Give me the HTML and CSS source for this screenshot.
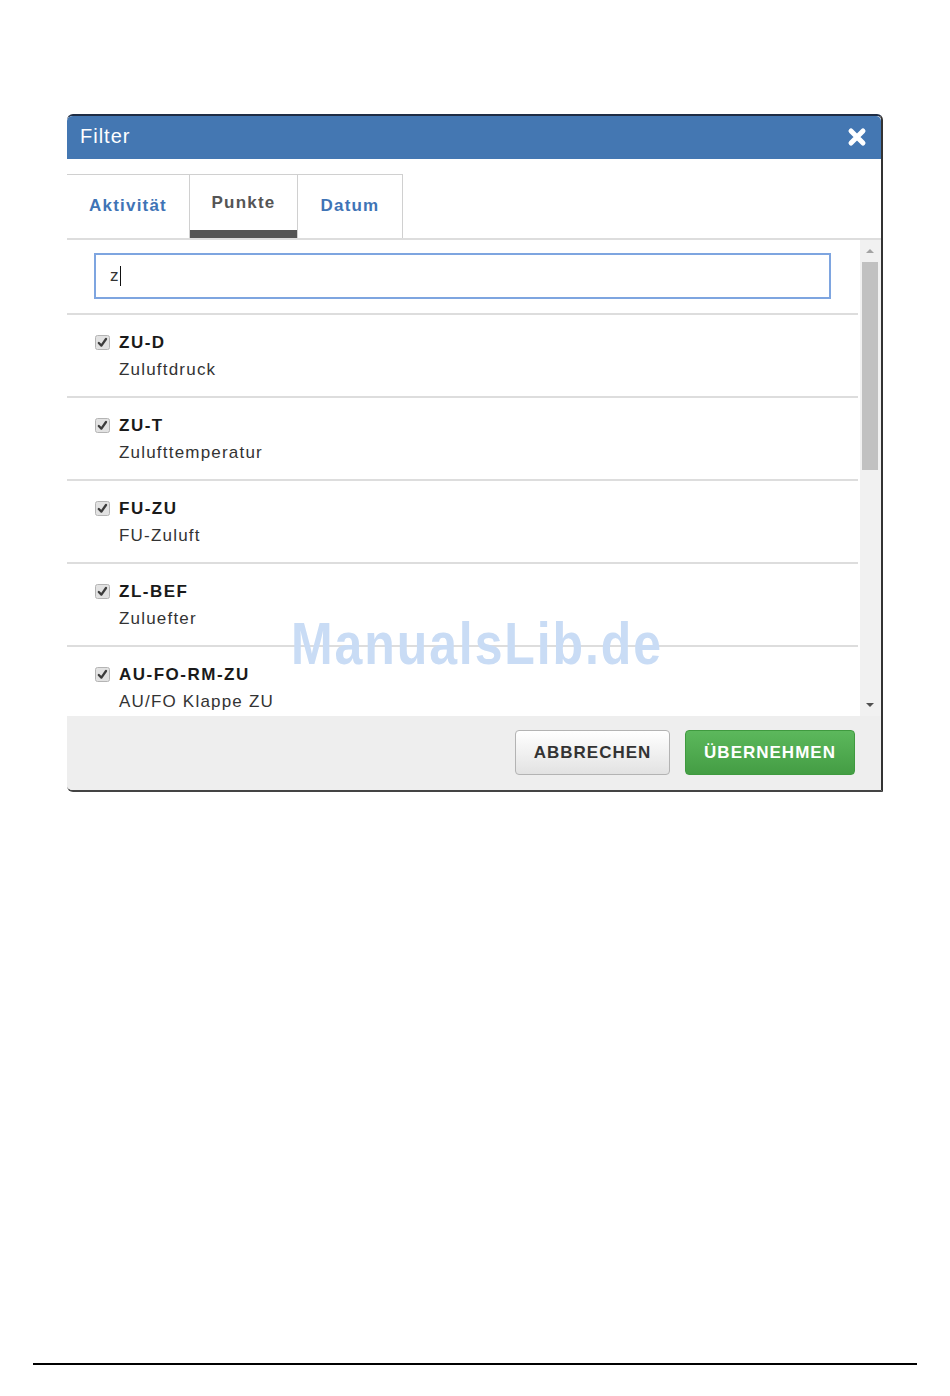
FILE: index.html
```html
<!DOCTYPE html>
<html lang="de">
<head>
<meta charset="utf-8">
<title>Filter</title>
<link rel="stylesheet" href="styles.css">
</head>
<body>
<div class="page">
  <div class="dialog">
    <div class="dlg-header">
      <span class="dlg-title">Filter</span>
      <svg class="dlg-close" width="20" height="20" viewBox="0 0 20 20" aria-hidden="true">
        <path d="M4 4 L16 16 M16 4 L4 16" stroke="#fff" stroke-width="5" stroke-linecap="round"/>
      </svg>
    </div>
    <div class="tabs">
      <div class="tab tab-a">Aktivität</div>
      <div class="tab tab-b active">Punkte</div>
      <div class="tab tab-c">Datum</div>
    </div>
    <div class="scroll">
      <div class="list">
        <div class="search">
          <div class="search-input"><span class="typed">z</span><span class="caret"></span></div>
        </div>
        <div class="row">
          <div class="row-head">
            <svg class="cb" width="15" height="15" viewBox="0 0 15 15"><rect x="0.5" y="0.5" width="14" height="14" rx="2" fill="#e2e2e2" stroke="#b4b4b4"/><path d="M3.8 8 L6.4 10.6 L11 4" fill="none" stroke="#3c3c3c" stroke-width="2.3" stroke-linecap="round" stroke-linejoin="round"/></svg>
            <span class="lbl">ZU-D</span>
          </div>
          <div class="sub">Zuluftdruck</div>
        </div>
        <div class="row">
          <div class="row-head">
            <svg class="cb" width="15" height="15" viewBox="0 0 15 15"><rect x="0.5" y="0.5" width="14" height="14" rx="2" fill="#e2e2e2" stroke="#b4b4b4"/><path d="M3.8 8 L6.4 10.6 L11 4" fill="none" stroke="#3c3c3c" stroke-width="2.3" stroke-linecap="round" stroke-linejoin="round"/></svg>
            <span class="lbl">ZU-T</span>
          </div>
          <div class="sub">Zulufttemperatur</div>
        </div>
        <div class="row">
          <div class="row-head">
            <svg class="cb" width="15" height="15" viewBox="0 0 15 15"><rect x="0.5" y="0.5" width="14" height="14" rx="2" fill="#e2e2e2" stroke="#b4b4b4"/><path d="M3.8 8 L6.4 10.6 L11 4" fill="none" stroke="#3c3c3c" stroke-width="2.3" stroke-linecap="round" stroke-linejoin="round"/></svg>
            <span class="lbl">FU-ZU</span>
          </div>
          <div class="sub">FU-Zuluft</div>
        </div>
        <div class="row">
          <div class="row-head">
            <svg class="cb" width="15" height="15" viewBox="0 0 15 15"><rect x="0.5" y="0.5" width="14" height="14" rx="2" fill="#e2e2e2" stroke="#b4b4b4"/><path d="M3.8 8 L6.4 10.6 L11 4" fill="none" stroke="#3c3c3c" stroke-width="2.3" stroke-linecap="round" stroke-linejoin="round"/></svg>
            <span class="lbl">ZL-BEF</span>
          </div>
          <div class="sub">Zuluefter</div>
        </div>
        <div class="row">
          <div class="row-head">
            <svg class="cb" width="15" height="15" viewBox="0 0 15 15"><rect x="0.5" y="0.5" width="14" height="14" rx="2" fill="#e2e2e2" stroke="#b4b4b4"/><path d="M3.8 8 L6.4 10.6 L11 4" fill="none" stroke="#3c3c3c" stroke-width="2.3" stroke-linecap="round" stroke-linejoin="round"/></svg>
            <span class="lbl">AU-FO-RM-ZU</span>
          </div>
          <div class="sub">AU/FO Klappe ZU</div>
        </div>
      </div>
      <div class="scrollbar">
        <div class="sb-btn"><span class="arrow-up"></span></div>
        <div class="sb-thumb"></div>
        <div class="sb-fill"></div>
        <div class="sb-btn"><span class="arrow-down"></span></div>
      </div>
      <div class="watermark">ManualsLib.de</div>
    </div>
    <div class="dlg-footer">
      <button class="btn btn-cancel">ABBRECHEN</button>
      <button class="btn btn-ok">ÜBERNEHMEN</button>
    </div>
  </div>
  <div class="rule"></div>
</div>
</body>
</html>
```

FILE: styles.css
```css
* { box-sizing: border-box; }

html, body {
  margin: 0;
  padding: 0;
  background: #fff;
}

body {
  font-family: "Liberation Sans", Arial, sans-serif;
  color: #333;
}

.page {
  min-height: 1396px;
  display: flex;
  flex-direction: column;
  padding: 114px 0 31px 67px;
}

.dialog {
  width: 816px;
  background: #fff;
  border-top: 2px solid #1f2d44;
  border-right: 2px solid #333;
  border-bottom: 2px solid #444;
  border-radius: 6px 6px 0 6px;
  overflow: hidden;
}

.dlg-header {
  height: 43px;
  background: #4477b2;
  display: flex;
  align-items: center;
  justify-content: space-between;
  padding: 0 14px 2px 13px;
  border-radius: 5px 5px 0 0;
}

.dlg-title {
  color: #fff;
  font-size: 20px;
  letter-spacing: 1px;
}

.dlg-close {
  display: block;
}

.tabs {
  display: flex;
  margin-top: 15px;
  border-bottom: 2px solid #ddd;
}

.tab {
  height: 64px;
  border-top: 1px solid #d0d0d0;
  border-right: 1px solid #d0d0d0;
  display: flex;
  align-items: center;
  justify-content: center;
  font-size: 17px;
  font-weight: bold;
  letter-spacing: 1.2px;
  color: #3f74b6;
  padding-bottom: 2px;
}

.tab-a { width: 123px; }
.tab-b { width: 108px; }
.tab-c { width: 105px; }

.tab.active {
  color: #555;
  padding-bottom: 8px;
  box-shadow: inset 0 -8px 0 #555;
}

.scroll {
  position: relative;
  height: 476px;
  display: flex;
}

.list {
  flex: 1;
  overflow: hidden;
}

.search {
  padding: 13px 29px 14px 27px;
}

.search-input {
  height: 46px;
  border: 2px solid #7ea5e0;
  display: flex;
  align-items: center;
  padding-left: 14px;
  font-size: 17px;
  color: #333;
}

.caret {
  display: inline-block;
  width: 1px;
  height: 20px;
  background: #111;
  margin-left: 1px;
}

.row {
  height: 83px;
  border-top: 2px solid #ddd;
  padding: 14px 0 0 28px;
  margin-right: 2px;
}

.row-head {
  display: flex;
  align-items: center;
  height: 27px;
}

.cb {
  display: block;
  margin-right: 9px;
  flex: none;
}

.lbl {
  font-size: 17px;
  font-weight: bold;
  color: #1a1a1a;
  letter-spacing: 1.5px;
}

.sub {
  height: 27px;
  line-height: 27px;
  padding-left: 24px;
  font-size: 17px;
  letter-spacing: 1.2px;
  color: #333;
}

.scrollbar {
  width: 21px;
  background: #f1f1f1;
  display: flex;
  flex-direction: column;
}

.sb-btn {
  height: 22px;
  display: flex;
  align-items: center;
  justify-content: center;
  padding-right: 1px;
}

.arrow-up {
  width: 0;
  height: 0;
  border-left: 4px solid transparent;
  border-right: 4px solid transparent;
  border-bottom: 4px solid #a3a3a3;
}

.arrow-down {
  width: 0;
  height: 0;
  border-left: 4px solid transparent;
  border-right: 4px solid transparent;
  border-top: 4px solid #505050;
}

.sb-thumb {
  height: 208px;
  margin: 0 3px 0 2px;
  background: #c1c1c1;
}

.sb-fill {
  flex: 1;
}

.watermark {
  position: absolute;
  left: 224px;
  top: 374px;
  font-size: 50px;
  font-weight: bold;
  letter-spacing: 1.9px;
  color: #c9dcf5;
  transform: scaleY(1.2);
  transform-origin: left top;
  white-space: nowrap;
  pointer-events: none;
  line-height: 1;
}

.dlg-footer {
  height: 74px;
  background: #eee;
  display: flex;
  justify-content: flex-end;
  align-items: flex-start;
  gap: 15px;
  padding: 14px 26px 0 0;
}

.btn {
  height: 45px;
  padding: 0 17px;
  font-family: "Liberation Sans", Arial, sans-serif;
  font-size: 17px;
  font-weight: bold;
  letter-spacing: 1px;
  border-radius: 4px;
}

.btn-cancel {
  width: 155px;
  color: #333;
  border: 1px solid #b3b3b3;
  background: linear-gradient(#ffffff, #e2e2e2);
}

.btn-ok {
  width: 170px;
  color: #fff;
  border: 1px solid #3f9a3f;
  background: linear-gradient(#5cb85c, #449d44);
}

.rule {
  margin-top: auto;
  margin-left: -34px;
  width: 884px;
  height: 2px;
  background: #000;
}
```
